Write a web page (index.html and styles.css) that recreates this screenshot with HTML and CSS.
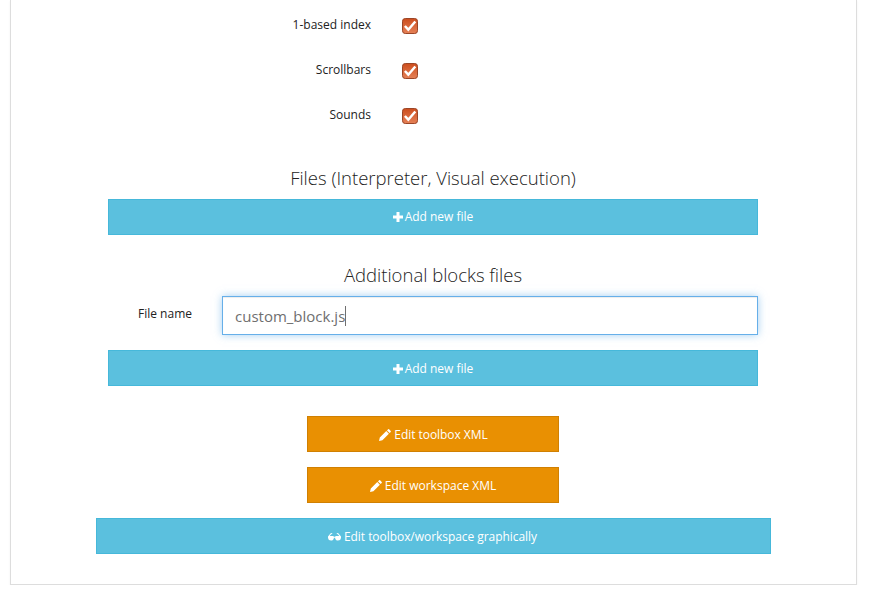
FILE: index.html
```
<!DOCTYPE html>
<html lang="en">
<head>
<meta charset="utf-8">
<title>Editor options</title>
<link rel="stylesheet" href="styles.css">
</head>
<body>
<svg class="defs" aria-hidden="true">
  <defs>
    <linearGradient id="box" x1="0" y1="0" x2="0" y2="1"><stop offset="0" stop-color="#cc4d1d"/><stop offset="1" stop-color="#e58157"/></linearGradient>
    <symbol id="check" viewBox="0 0 16 16"><rect x=".5" y=".5" width="15" height="15" rx="2.8" fill="url(#box)" stroke="#9b4526"/><path d="M2.900 8 6.300 11.700 13.300 3.500" fill="none" stroke="#fff" stroke-width="2.5"/></symbol>
    <symbol id="plus" viewBox="0 0 10 10"><path d="M3.5 0h3v3.5H10v3H6.5V10h-3V6.500H0v-3h3.500z"/></symbol>
    <symbol id="pencil" viewBox="0 0 12 12"><path d="M0 12 .8 8.600 7.300 2.100 9.900 4.700 3.400 11.200zM8 1.400 9.100.3Q9.600-.1 10.100.3L11.700 1.900Q12.100 2.400 11.700 2.900L10.600 4z"/></symbol>
    <symbol id="glasses" viewBox="0 0 13 8"><path d="M0 3.500 2.700.3 4.200 0v1L3.200 1.200 1.700 3H4.700Q5.700 3 6 3.700H7Q7.300 3 8.300 3h3L9.800 1.200 8.800 1V0l1.500.3L13 3.500V5Q12.700 7.500 10 7.500 7.300 7.500 7.100 4.700H5.900Q5.700 7.500 3 7.500.3 7.500 0 5z"/></symbol>
  </defs>
</svg>
<main class="panel">
  <div class="options">
    <div class="option"><label>1-based index</label><svg class="check"><use href="#check"/></svg></div>
    <div class="option"><label>Scrollbars</label><svg class="check"><use href="#check"/></svg></div>
    <div class="option"><label>Sounds</label><svg class="check"><use href="#check"/></svg></div>
  </div>
  <section class="files">
    <h2>Files (Interpreter, Visual execution)</h2>
    <button class="btn info"><svg class="plus"><use href="#plus"/></svg>Add new file</button>
  </section>
  <section class="files">
    <h2>Additional blocks files</h2>
    <div class="field">
      <label>File name</label>
      <div class="input">custom_block.js<span class="caret"></span></div>
    </div>
    <button class="btn info low"><svg class="plus"><use href="#plus"/></svg>Add new file</button>
  </section>
  <div class="actions">
    <button class="btn warning low toolbox"><svg class="pencil"><use href="#pencil"/></svg>Edit toolbox XML</button>
    <button class="btn warning low"><svg class="pencil"><use href="#pencil"/></svg>Edit workspace XML</button>
    <button class="btn info low wide"><svg class="glasses"><use href="#glasses"/></svg>Edit toolbox/workspace graphically</button>
  </div>
</main>
</body>
</html>
```
FILE: styles.css
```
* { box-sizing: border-box; }
body {
  margin: 0;
  background: #fff;
  color: #222;
  font: 12px/18px "Open Sans", "Noto Sans", sans-serif;
  overflow: hidden;
}
.defs { position: absolute; width: 0; height: 0; }
.panel {
  width: 847px;
  height: 585px;
  margin-left: 10px;
  padding: 16px 0 30px;
  border: 1px solid #ddd;
  border-top: 0;
  box-shadow: 0 1px 2px rgba(0, 0, 0, .06);
}
.options { display: grid; grid-auto-rows: 45px; }
.option { display: flex; align-items: flex-start; }
.option label { width: 360px; text-align: right; }
.check { width: 16px; height: 16px; margin: 2px 0 0 31px; }
.files { width: 650px; margin: 0 0 0 97px; }
.files h2 {
  margin: 0;
  padding: 14px 0 9px;
  font-size: 18.5px;
  font-weight: 300;
  line-height: 25px;
  text-align: center;
}
.files + .files h2 { padding-top: 27px; }
.btn {
  display: flex;
  align-items: center;
  justify-content: center;
  width: 100%;
  height: 36px;
  padding: 0 0 1px;
  border: 1px solid;
  color: #fff;
  font: inherit;
}
.low { padding: 1px 0 0; }
.info { background: #5bc0de; border-color: #46b8da; }
.warning { width: 252px; margin-right: 1px; background: #e99002; border-color: #d08002; }
.toolbox { padding-left: 1px; letter-spacing: -.05px; }
.wide { padding-right: 2px; letter-spacing: -.05px; }
.btn svg { fill: currentColor; flex: none; }
.plus { width: 10px; height: 10px; margin-right: 2px; }
.pencil { width: 12px; height: 12px; margin-right: 3px; }
.glasses { width: 13px; height: 8px; margin-right: 3px; }
.field { display: flex; margin-bottom: 15px; }
.field label { width: 84px; padding-top: 9px; text-align: right; }
.input {
  display: flex;
  align-items: center;
  width: 536px;
  height: 39px;
  margin-left: 30px;
  padding: 1px 12px;
  border: 1px solid #66afe9;
  box-shadow: inset 0 1px 1px rgba(0, 0, 0, .075), 0 0 8px rgba(102, 175, 233, .6);
  color: #6f6f6f;
  font-size: 15px;
}
.caret { width: 1px; height: 20px; background: #6f6f6f; }
.actions {
  display: flex;
  flex-direction: column;
  align-items: center;
  gap: 15px;
  width: 675px;
  margin: 30px 0 0 85px;
}
```
